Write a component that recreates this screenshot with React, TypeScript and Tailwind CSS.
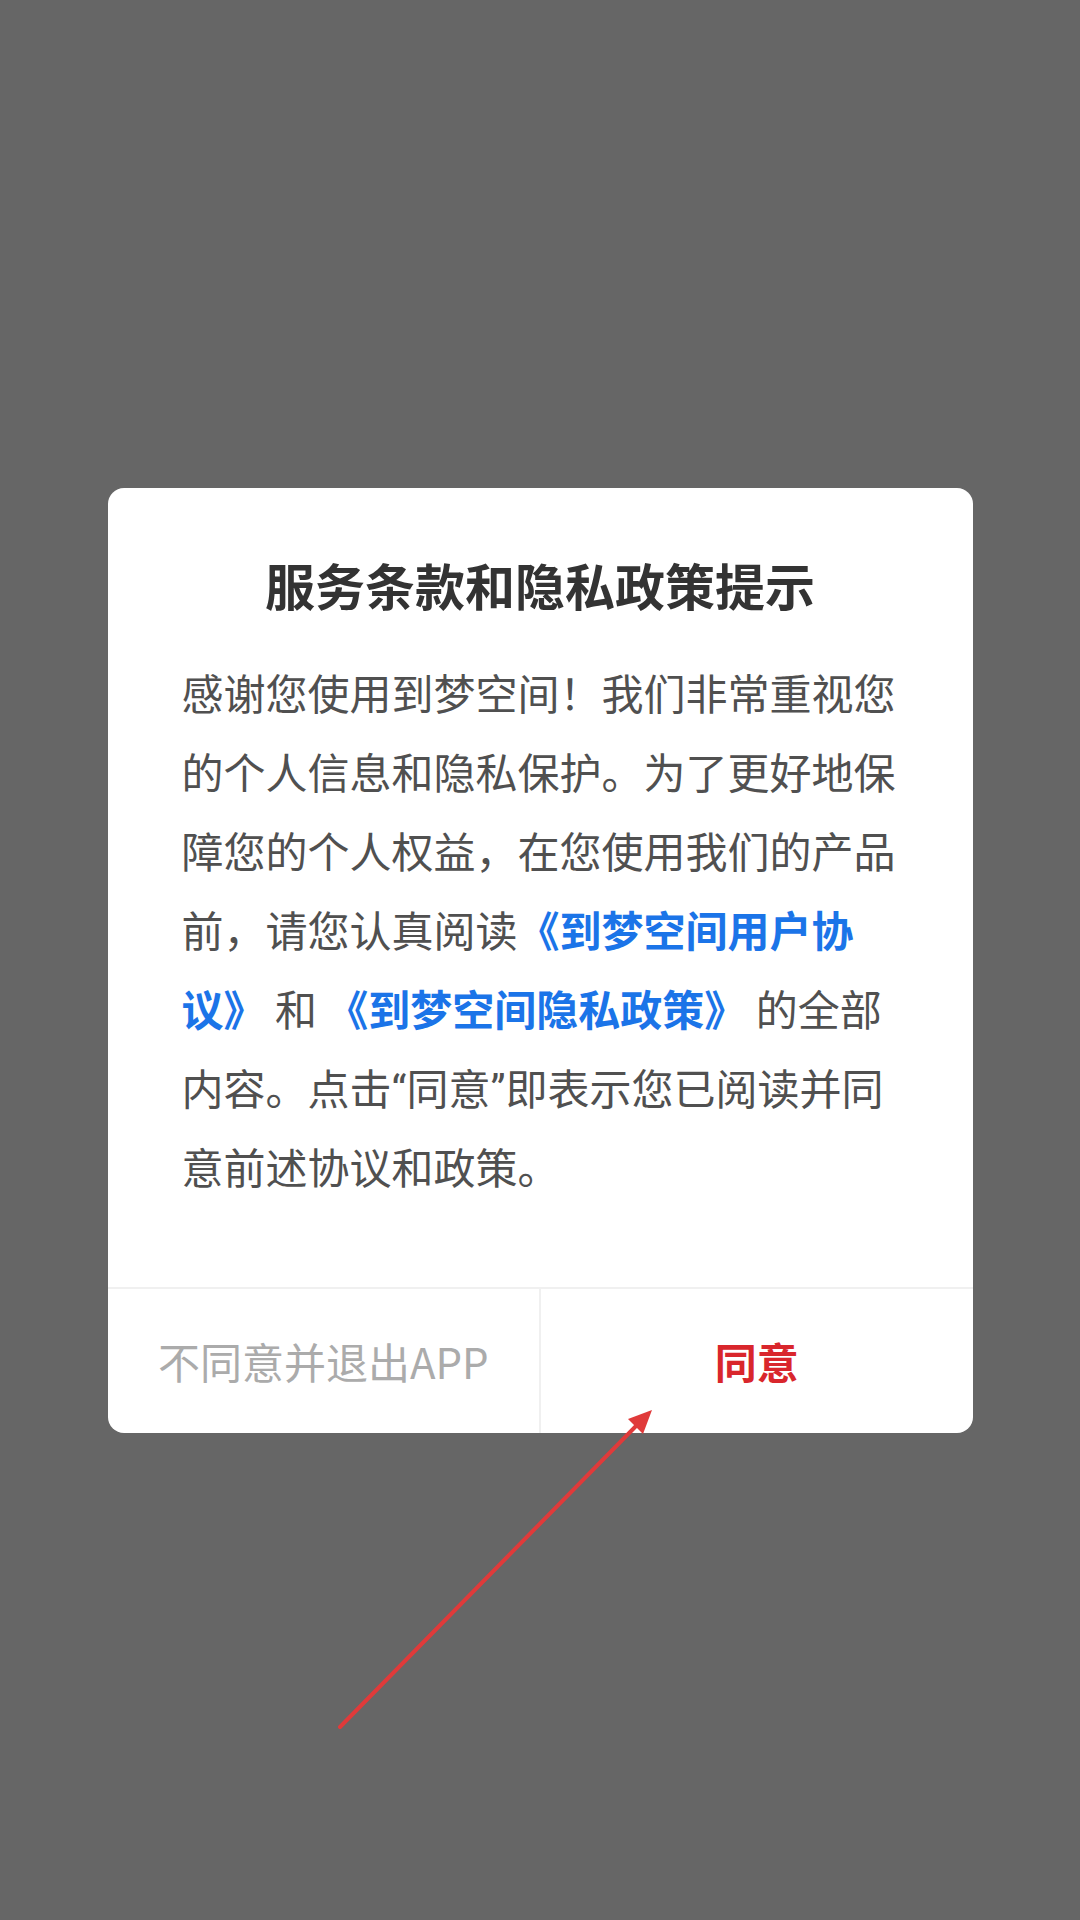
import React from 'react';

const FONT = { fontFamily: '"Noto Sans CJK SC", "Noto Sans", sans-serif' };

function Link({ children }: { children: React.ReactNode }) {
  return <span className="font-bold text-[#1b74e8]">{children}</span>;
}

// narrow latin-style quotes, as on the device
function Q({ children }: { children: React.ReactNode }) {
  return (
    <span className="leading-none" style={{ fontFamily: 'Roboto, "Noto Sans", sans-serif' }}>
      {children}
    </span>
  );
}

function PrivacyDialog() {
  return (
    <div className="w-[865px] rounded-[16px] bg-white overflow-hidden">
      <div className="px-[74px] pt-[61px] pb-[82px]">
        <h1 className="text-center text-[50px] leading-[70px] font-bold text-[#333333]">
          服务条款和隐私政策提示
        </h1>
        <p className="mt-[33px] text-[42px] leading-[79px] text-[#505050]">
          感谢您使用到梦空间！我们非常重视您的个人信息和隐私保护。为了更好地保障您的个人权益，在您使用我们的产品前，请您认真阅读
          <Link>《到梦空间用户协议》</Link> 和 <Link>《到梦空间隐私政策》</Link> 的全部内容。点击<Q>“</Q>同意<Q>”</Q>即表示您已阅读并同意前述协议和政策。
        </p>
      </div>
      <div className="flex h-[146px] border-t-2 border-[#f0f0f0]">
        <button className="flex-1 flex items-center justify-center text-[42px] text-[#ababab]">
          不同意并退出APP
        </button>
        <div className="w-[2px] bg-[#f0f0f0]" />
        <button className="flex-1 flex items-center justify-center text-[42px] font-bold text-[#d9262c]">
          同意
        </button>
      </div>
    </div>
  );
}

function Arrow() {
  // annotation drawn over the screenshot
  return (
    <svg className="absolute inset-0 pointer-events-none" width="1080" height="1920" viewBox="0 0 1080 1920">
      <line x1="340" y1="1727" x2="638" y2="1424" stroke="#e03a3a" strokeWidth="4" strokeLinecap="round" />
      <polygon points="652,1410 628,1419 643,1434" fill="#e03a3a" />
    </svg>
  );
}

export default function App() {
  return (
    <div className="relative w-[1080px] h-[1920px] bg-[#666666] flex items-center justify-center" style={FONT}>
      <PrivacyDialog />
      <Arrow />
    </div>
  );
}
